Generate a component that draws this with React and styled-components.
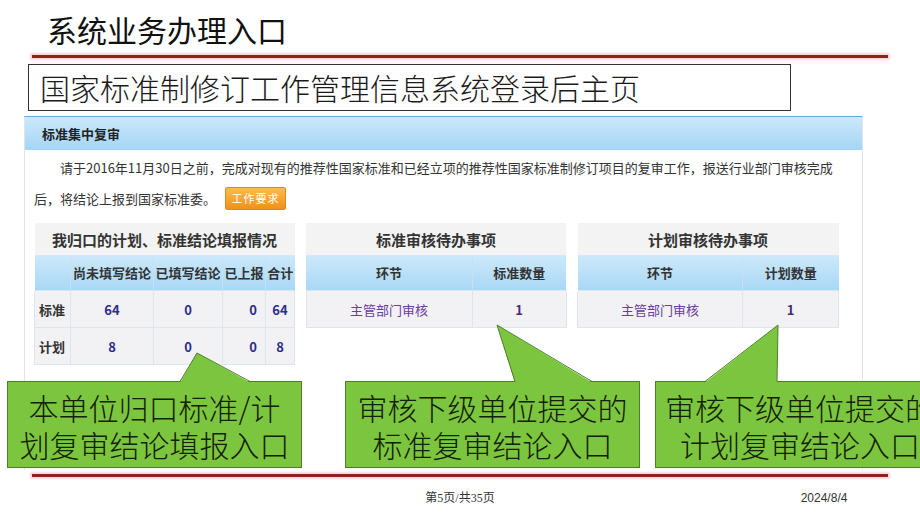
import React from "react";
import styled, { createGlobalStyle } from "styled-components";

const GlobalStyle = createGlobalStyle`
  html, body {
    margin: 0;
    padding: 0;
    background: #ffffff;
  }
  body {
    font-family: "Noto Sans CJK SC", "Liberation Sans", sans-serif;
  }
`;

const Slide = styled.div`
  position: relative;
  width: 920px;
  height: 518px;
  overflow: hidden;
  background: #ffffff;
  display: flex;
  flex-direction: column;
`;

const Title = styled.h1`
  margin: 0;
  padding: 11px 0 0 47px;
  height: 43px;
  box-sizing: border-box;
  font-family: "Noto Sans CJK SC", sans-serif;
  font-size: 30px;
  line-height: 36px;
  font-weight: 400;
  color: #111111;
`;

const Rule = styled.div`
  margin: ${(p) => p.$top}px 32px 0 32px;
  height: 3px;
  background: #8e231b;
  box-shadow: 0 0 2px 2px #fbd5dc;
`;

const SubtitleBox = styled.div`
  margin: 6px 0 0 28px;
  width: 763px;
  height: 47px;
  box-sizing: border-box;
  border: 1.5px solid #333333;
  padding-left: 11px;
  font-family: "Noto Sans CJK SC", sans-serif;
  font-weight: 300;
  font-size: 30px;
  line-height: 44px;
  color: #1a1a1a;
  white-space: nowrap;
`;

const Panel = styled.div`
  margin: 5px 0 0 24px;
  width: 839px;
  height: 354px;
  box-sizing: border-box;
  border-left: 1px solid #dfe4ea;
  border-right: 1px solid #dfe4ea;
  border-top: 1px solid #6aa7da;
  font-family: "Noto Sans CJK SC", sans-serif;
`;

const PanelHead = styled.div`
  height: 33px;
  background: linear-gradient(#cbe9fb, #a4d5f5);
  padding-left: 17px;
  font-size: 13px;
  font-weight: 700;
  line-height: 33px;
  color: #222222;
`;

const PanelBody = styled.div`
  padding: 0 0 0 9px;
`;

const Notice = styled.p`
  margin: 0;
  padding-top: 2px;
  font-size: 13px;
  line-height: 31px;
  color: #333333;
  white-space: nowrap;
`;

const NoticeLine = styled.span`
  display: block;
  padding-left: ${(p) => p.$indent || 0}px;
`;

const WorkButton = styled.span`
  display: inline-block;
  vertical-align: middle;
  margin: -3px 0 0 9px;
  width: 61px;
  height: 23px;
  box-sizing: border-box;
  border: 1px solid #e08a1a;
  border-radius: 2px;
  background: linear-gradient(#fbbd4e, #f0901a);
  color: #ffffff;
  font-size: 11px;
  line-height: 21px;
  text-align: center;
  letter-spacing: 1px;
`;

const TableRow = styled.div`
  display: grid;
  grid-template-columns: 260px 260px 261px;
  column-gap: 11.5px;
  align-items: start;
  margin-top: 9px;
`;

const Table = styled.table`
  width: 100%;
  border-collapse: collapse;
  table-layout: fixed;
  font-size: 13px;
`;

const Caption = styled.th`
  height: 32px;
  padding: 0;
  background: #f3f3f3;
  font-size: 15px;
  font-weight: 700;
  color: #333333;
  text-align: center;
  white-space: nowrap;
`;

const HeadCell = styled.th`
  height: 35px;
  padding: 0;
  background: linear-gradient(#cde9fa, #a8d7f5);
  border-left: 1px solid ${(p) => (p.$first ? "transparent" : "#c3e2f6")};
  font-weight: 700;
  color: #333333;
  text-align: center;
  white-space: nowrap;
`;

const Cell = styled.td`
  height: 36px;
  padding: 0 ${(p) => (p.$right ? "8px" : "0")} 0 ${(p) => (p.$label ? "4px" : "0")};
  background: #f2f2f4;
  border: 1px solid #dde6ee;
  text-align: ${(p) => (p.$label ? "left" : p.$right ? "right" : "center")};
  font-weight: ${(p) => (p.$plain ? 400 : 700)};
  color: ${(p) => p.$color || "#333333"};
  white-space: nowrap;
`;

const Callout = styled.div`
  position: absolute;
  left: ${(p) => p.$left}px;
  top: 381px;
  width: ${(p) => p.$width}px;
  height: 87px;
  box-sizing: border-box;
  background: #7cc53f;
  border: 1px solid #4e7e2a;
  padding-top: 7px;
  font-family: "Noto Sans CJK SC", sans-serif;
  font-weight: 300;
  font-size: 30px;
  line-height: 37px;
  color: #142008;
  text-align: center;
  white-space: nowrap;
`;

const CalloutLine = styled.div`
  height: 37px;
`;

const Pointer = styled.svg`
  position: absolute;
  left: -1px;
  top: -1px;
  overflow: visible;
`;

const Footer = styled.div`
  display: grid;
  grid-template-columns: 1fr auto 1fr;
  margin-top: 13px;
  font-size: 12px;
  line-height: 16px;
  color: #333333;
`;

const PageNo = styled.span`
  font-family: "Liberation Serif", "Noto Sans CJK SC", serif;
`;

const DateText = styled.span`
  padding-left: 306px;
  font-family: "Liberation Sans", sans-serif;
`;

const Bubble = ({ left, width, base, tip, lines }) => (
  <Callout $left={left} $width={width}>
    <Pointer width="1" height="1">
      <polygon
        points={`${base[0]},1.6 ${tip[0]},${tip[1]} ${base[1]},1.6`}
        fill="#7cc53f"
      />
      <polyline
        points={`${base[0]},0.5 ${tip[0]},${tip[1]} ${base[1]},0.5`}
        fill="none"
        stroke="#4e7e2a"
        strokeWidth="1"
      />
    </Pointer>
    {lines.map((l) => (
      <CalloutLine key={l}>{l}</CalloutLine>
    ))}
  </Callout>
);

const num = "#2d2d8c";
const purple = "#6b3b9e";

const App = () => {
  return (
    <Slide>
      <GlobalStyle />
      <Title>系统业务办理入口</Title>
      <Rule $top={12} />
      <SubtitleBox>国家标准制修订工作管理信息系统登录后主页</SubtitleBox>
      <Panel>
        <PanelHead>标准集中复审</PanelHead>
        <PanelBody>
          <Notice>
            <NoticeLine $indent={26}>
              请于2016年11月30日之前，完成对现有的推荐性国家标准和已经立项的推荐性国家标准制修订项目的复审工作，报送行业部门审核完成
            </NoticeLine>
            <NoticeLine>
              后，将结论上报到国家标准委。
              <WorkButton>工作要求</WorkButton>
            </NoticeLine>
          </Notice>
          <TableRow>
            <Table>
              <colgroup>
                <col style={{ width: 36 }} />
                <col style={{ width: 83 }} />
                <col style={{ width: 69 }} />
                <col style={{ width: 43 }} />
                <col style={{ width: 29 }} />
              </colgroup>
              <thead>
                <tr>
                  <Caption colSpan={5}>我归口的计划、标准结论填报情况</Caption>
                </tr>
                <tr>
                  <HeadCell $first></HeadCell>
                  <HeadCell>尚未填写结论</HeadCell>
                  <HeadCell>已填写结论</HeadCell>
                  <HeadCell>已上报</HeadCell>
                  <HeadCell>合计</HeadCell>
                </tr>
              </thead>
              <tbody>
                <tr>
                  <Cell $label>标准</Cell>
                  <Cell $color={num}>64</Cell>
                  <Cell $color={num}>0</Cell>
                  <Cell $color={num} $right>0</Cell>
                  <Cell $color={num}>64</Cell>
                </tr>
                <tr>
                  <Cell $label>计划</Cell>
                  <Cell $color={num}>8</Cell>
                  <Cell $color={num}>0</Cell>
                  <Cell $color={num} $right>0</Cell>
                  <Cell $color={num}>8</Cell>
                </tr>
              </tbody>
            </Table>
            <Table>
              <colgroup>
                <col style={{ width: 166 }} />
                <col style={{ width: 94 }} />
              </colgroup>
              <thead>
                <tr>
                  <Caption colSpan={2}>标准审核待办事项</Caption>
                </tr>
                <tr>
                  <HeadCell $first>环节</HeadCell>
                  <HeadCell>标准数量</HeadCell>
                </tr>
              </thead>
              <tbody>
                <tr>
                  <Cell $plain $color={purple}>主管部门审核</Cell>
                  <Cell $color="#4a2a78">1</Cell>
                </tr>
              </tbody>
            </Table>
            <Table>
              <colgroup>
                <col style={{ width: 165 }} />
                <col style={{ width: 96 }} />
              </colgroup>
              <thead>
                <tr>
                  <Caption colSpan={2}>计划审核待办事项</Caption>
                </tr>
                <tr>
                  <HeadCell $first>环节</HeadCell>
                  <HeadCell>计划数量</HeadCell>
                </tr>
              </thead>
              <tbody>
                <tr>
                  <Cell $plain $color={purple}>主管部门审核</Cell>
                  <Cell $color="#4a2a78">1</Cell>
                </tr>
              </tbody>
            </Table>
          </TableRow>
        </PanelBody>
      </Panel>
      <Rule $top={4} />
      <Footer>
        <span />
        <PageNo>第5页/共35页</PageNo>
        <DateText>2024/8/4</DateText>
      </Footer>

      <Bubble
        left={7}
        width={295}
        base={[173, 243]}
        tip={[190, -28]}
        lines={["本单位归口标准/计", "划复审结论填报入口"]}
      />
      <Bubble
        left={345}
        width={295}
        base={[170, 247]}
        tip={[152, -56]}
        lines={["审核下级单位提交的", "标准复审结论入口"]}
      />
      <Bubble
        left={655}
        width={290}
        base={[50, 122]}
        tip={[123, -56]}
        lines={["审核下级单位提交的", "计划复审结论入口"]}
      />
    </Slide>
  );
};

export default App;
